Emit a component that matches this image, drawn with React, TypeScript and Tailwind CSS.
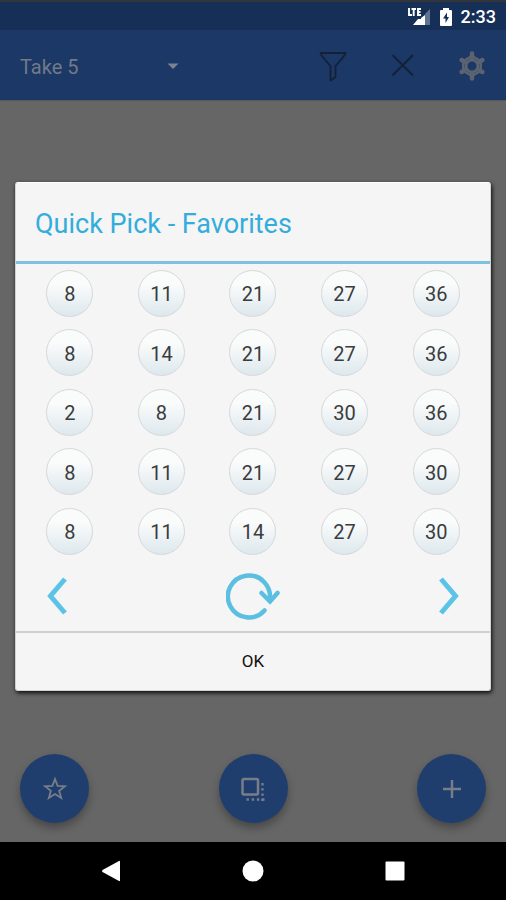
import { useState } from "react";

const picks = [
  [8, 11, 21, 27, 36],
  [8, 14, 21, 27, 36],
  [2, 8, 21, 30, 36],
  [8, 11, 21, 27, 30],
  [8, 11, 14, 27, 30],
];

function StatusBar() {
  return (
    <div className="flex h-[30px] items-center justify-end border-t-2 border-[#33353b] bg-[#162f56] pt-[2px] pr-[10px] text-white">
      <svg width="24" height="20" viewBox="0 0 24 20" aria-hidden="true">
        <path d="M23 2V18H18V7Z" fill="#5f7391" />
        <path d="M18 8V18H6L11 12H14V11Z" fill="#fff" />
        <path d="M2 1V8H5M4.500 2H9M6.700 2V9M14 2H11V8H14M11 5H13.500" fill="none" stroke="#fff" strokeWidth="1.900" />
      </svg>
      <svg className="ml-2" width="14" height="20" viewBox="0 0 14 20" aria-hidden="true">
        <path d="M4 1H10V3H12Q13 3 13 4V18Q13 19 12 19H2Q1 19 1 18V4Q1 3 2 3H4Z" fill="#fff" />
        <path d="M8 5.500L4 11.500H6.500V16L10 10H8Z" fill="#162f56" />
      </svg>
      <span className="ml-2 text-[18px] leading-5 font-medium">2:33</span>
    </div>
  );
}

function AppBar() {
  const [game, setGame] = useState("Take 5");

  return (
    <header className="flex h-[70px] items-center bg-[#1b3867] px-5 pt-[2px]">
      <div className="relative w-[160px]">
        <select
          aria-label="Game"
          className="block h-10 w-full appearance-none bg-transparent pt-[2px] text-[20px] leading-6 text-[#727a87] outline-none"
          value={game}
          onChange={(e) => setGame(e.target.value)}
        >
          <option>Take 5</option>
        </select>
        <svg className="pointer-events-none absolute top-[17px] right-0" width="14" height="7" viewBox="0 0 14 7" aria-hidden="true">
          <path d="M1.500 0.500H12.500L7 6Z" fill="#7b8290" />
        </svg>
      </div>
      <div className="ml-auto flex items-center">
        <button aria-label="Filter" className="mr-10">
          <svg className="block" width="30" height="32" viewBox="0 0 30 32" fill="none" stroke="#142038" strokeWidth="1.800" strokeLinejoin="round">
            <path d="M2.500 3H27.500Q27.500 5 17.500 16V27L12.500 30.500V16Q2.500 5 2.500 3Z" />
          </svg>
        </button>
        <button aria-label="Clear" className="mr-10">
          <svg className="block" width="30" height="32" viewBox="0 0 30 32" fill="none" stroke="#142038" strokeWidth="2">
            <path d="M4.500 5L25 25.500M25 5L4.500 25.500" />
          </svg>
        </button>
        <button aria-label="Settings">
          <svg className="block" width="28" height="30" viewBox="0 0 28 30" fill="none" stroke="#5c6370">
            <path d="M14 5L22.700 10V20L14 25L5.300 20V10Z" strokeWidth="2.500" strokeLinejoin="round" />
            <circle cx="14" cy="15" r="6" strokeWidth="3" />
            <path
              d="M14 6.500V2.500M14 23.500V27.500M6.600 10.700L3.600 9M21.400 19.300L24.400 21M6.600 19.300L3.600 21M21.400 10.700L24.400 9"
              strokeWidth="4.500"
              strokeLinecap="round"
            />
          </svg>
        </button>
      </div>
    </header>
  );
}

function Fab({ label, children }: { label: string; children: React.ReactNode }) {
  return (
    <button
      aria-label={label}
      className="flex size-[69px] items-center justify-center rounded-full bg-[#1f3e6d] shadow-[0_5px_8px_rgba(0,0,0,0.3)]"
    >
      <svg width="28" height="28" viewBox="0 0 28 28" fill="none" stroke="#777e8a" strokeWidth="2">
        {children}
      </svg>
    </button>
  );
}

function QuickPickDialog() {
  return (
    <div
      role="dialog"
      aria-labelledby="dialog-title"
      className="w-full rounded-[3px] border border-[#d2d2d2] border-t-white bg-[#f5f5f5] shadow-[1px_2px_4px_rgba(0,0,0,0.9)]"
    >
      <h1 id="dialog-title" className="border-b-3 border-[#7fc1e0] px-[19px] pt-[25px] pb-[21px] text-[27px] leading-8 text-[#33addb]">
        Quick Pick - Favorites
      </h1>
      <div className="flex h-[298px] flex-col justify-between px-2 pt-[6px] pb-[7px]">
        {picks.map((row, i) => (
          <div key={i} className="grid grid-cols-5 justify-items-center">
            {row.map((n) => (
              <span
                key={n}
                className="flex size-[47px] items-center justify-center rounded-full border border-[#d5d8da] bg-linear-to-b from-[#fafbfb] from-30% to-[#dde8ed] pt-[2px] text-[20px] leading-6 text-[#3a3c3e]"
              >
                {n}
              </span>
            ))}
          </div>
        ))}
      </div>
      <div className="grid h-[69px] grid-cols-3 items-center px-[29px]">
        <button aria-label="Previous" className="justify-self-start">
          <svg className="block" width="26" height="42" viewBox="0 0 26 42" fill="none" stroke="#5bc3e8" strokeWidth="5">
            <path d="M20 4L5.500 21L20 38" />
          </svg>
        </button>
        <button aria-label="Pick again" className="justify-self-center">
          <svg className="block" width="54" height="50" viewBox="0 0 54 50" fill="none" stroke="#5bbfe2" strokeWidth="4.500" strokeLinecap="round">
            <path d="M38.500 39.500A21 21 0 1 1 43.500 29.500" />
            <path d="M35.500 22L44 30.500L51.500 22" />
          </svg>
        </button>
        <button aria-label="Next" className="justify-self-end">
          <svg className="block" width="26" height="42" viewBox="0 0 26 42" fill="none" stroke="#5bc3e8" strokeWidth="5">
            <path d="M6 4L20.500 21L6 38" />
          </svg>
        </button>
      </div>
      <button className="block h-[59px] w-full border-t-2 border-[#d0d0d0] text-[17px] leading-5 text-[#111]">OK</button>
    </div>
  );
}

export default function App() {
  return (
    <div className="relative flex min-h-screen flex-col bg-[#666] font-['Roboto',sans-serif]">
      <StatusBar />
      <AppBar />
      <main className="flex flex-1 items-end justify-between border-t border-[#585858] px-5 pb-[19px]">
        <Fab label="Favorites">
          <path d="M14 4L16.600 10.900L24 11.300L18.200 15.900L20.200 23L14 19L7.800 23L9.800 15.900L4 11.300L11.400 10.900Z" strokeWidth="1.800" />
        </Fab>
        <Fab label="Quick pick">
          <rect x="3.500" y="4" width="15.500" height="15.500" rx="1.500" strokeWidth="2.500" />
          <path d="M23.500 8V26M7.500 24.500H26" strokeWidth="2.400" strokeDasharray="2.400 2.800" />
        </Fab>
        <Fab label="Add">
          <path d="M14 5V23M5 14H23" strokeWidth="2.500" />
        </Fab>
      </main>
      <nav className="flex h-[58px] items-center justify-center gap-[120px] bg-black">
        <button aria-label="Back">
          <svg className="block" width="22" height="22" viewBox="0 0 22 22" fill="#fff">
            <path d="M19 1Q20 0.500 20 1.500V20.500Q20 21.500 19 21L2.500 12Q1.500 11 2.500 10Z" />
          </svg>
        </button>
        <button aria-label="Home">
          <svg className="block" width="22" height="22" viewBox="0 0 22 22" fill="#fff">
            <circle cx="11" cy="11" r="10.500" />
          </svg>
        </button>
        <button aria-label="Recent apps">
          <svg className="block" width="22" height="22" viewBox="0 0 22 22" fill="#fff">
            <rect x="1.500" y="1.500" width="19" height="19" rx="1" />
          </svg>
        </button>
      </nav>
      <div className="absolute inset-x-0 top-[30px] bottom-[58px] flex items-center px-[15px]">
        <QuickPickDialog />
      </div>
    </div>
  );
}
